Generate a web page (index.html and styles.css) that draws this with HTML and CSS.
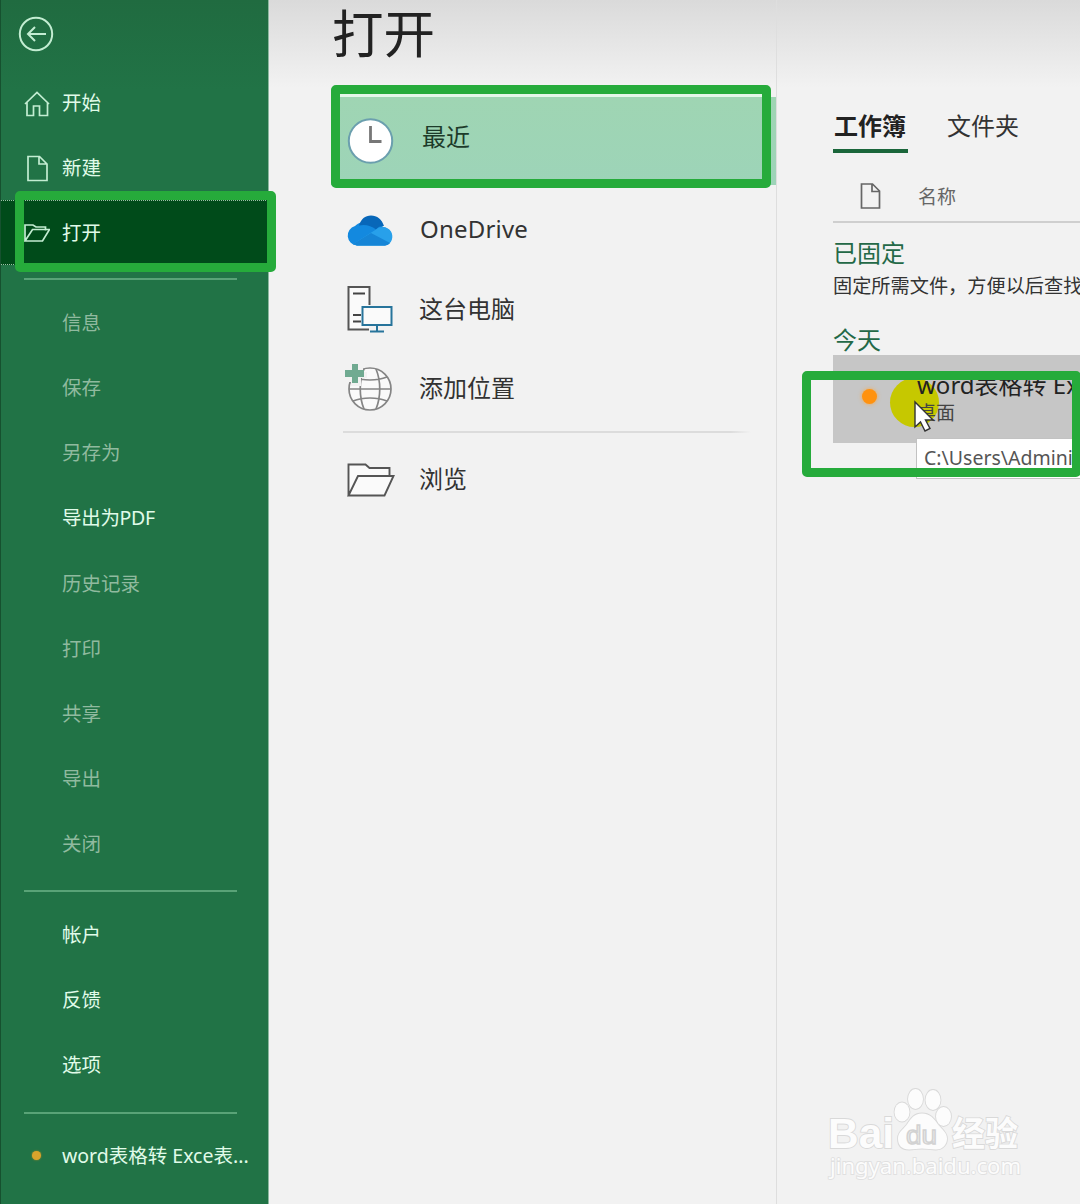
FILE: index.html
```html
<!DOCTYPE html>
<html lang="zh-CN">
<head>
<meta charset="utf-8">
<title>打开</title>
<link rel="stylesheet" href="styles.css">
</head>
<body>
<div class="app">
  <nav class="sidebar">
    <button class="back" aria-label="返回">
      <svg width="36" height="36" viewBox="0 0 36 36"><circle cx="18" cy="18" r="16.2"/><path d="M28 18H10M17 11L10 18l7 7"/></svg>
    </button>
    <a class="item"><svg class="ico" width="26" height="28" viewBox="0 0 26 28"><path d="M1 15L13 3.500 25 15M3 13.500V26.500h6.500V17h6v9.500H23.500V13.500"/></svg><span>开始</span></a>
    <a class="item"><svg class="ico" width="26" height="28" viewBox="0 0 26 28"><path d="M4 2.500h11.500l7.500 7.500v16.500H4zM15 2.500V10h8"/></svg><span>新建</span></a>
    <a class="item active"><svg class="ico" width="26" height="28" viewBox="0 0 26 28"><path d="M1 22V6h8l3 2h9.500v3.500M1 22l7.500-11.500H25.500L18.500 22z"/></svg><span>打开</span></a>
    <hr class="rule first">
    <a class="item off">信息</a>
    <a class="item off">保存</a>
    <a class="item off">另存为</a>
    <a class="item tight">导出为PDF</a>
    <a class="item off">历史记录</a>
    <a class="item off">打印</a>
    <a class="item off">共享</a>
    <a class="item off">导出</a>
    <a class="item off">关闭</a>
    <hr class="rule">
    <a class="item">帐户</a>
    <a class="item">反馈</a>
    <a class="item">选项</a>
    <hr class="rule">
    <a class="item recent"><i class="dot"></i><span>word表格转 Exce表...</span></a>
  </nav>

  <section class="places">
    <h1>打开</h1>
    <a class="place selected">
      <svg width="50" height="50" viewBox="0 0 50 50"><circle cx="25.500" cy="25" r="21.700" fill="#fff" stroke="#6b9fae" stroke-width="2"/><path d="M25.500 10v15.500h11" fill="none" stroke="#777" stroke-width="2.800"/></svg>
      <span>最近</span>
    </a>
    <a class="place">
      <svg width="50" height="50" viewBox="0 0 50 50"><path d="M12 39.500a10 10 0 0 1-2-19.600C12 18 14 17 16 16.500A15 15 0 0 1 38 21a9.500 9.500 0 0 1 2 18.500z" fill="#1389df"/><path d="M14 19.500C16 13 20 9.500 26 9.500c6 0 11 4 13 10.500-4 0-6 1-8 3.500-5-4-11-5.500-17-4z" fill="#0867b9"/><path d="M8 38L31 23.500c4-4 12-3 15 2 3 5 1 13-6 14H12z" fill="#28a0ea"/><path d="M8 38l18-11 19 10c-1 1.500-3 2.500-5 2.500H12z" fill="#1685d6"/></svg>
      <span class="latin">OneDrive</span>
    </a>
    <a class="place">
      <svg width="50" height="50" viewBox="0 0 50 50" fill="none"><path d="M24 44.500H3.500V2h21v18" fill="#fafafa" stroke="#555" stroke-width="2"/><path d="M8 8.500h12M8 30h8M8 36.500h8" stroke="#444" stroke-width="2"/><path d="M17.500 22h29v18h-29z" fill="#fafafa" stroke="#27749b" stroke-width="2"/><path d="M32 40v6M25 46.500h14" stroke="#27749b" stroke-width="2"/></svg>
      <span>这台电脑</span>
    </a>
    <a class="place">
      <svg width="50" height="50" viewBox="0 0 50 50"><g fill="none" stroke="#858585" stroke-width="1.700"><circle cx="25" cy="25" r="21" fill="#fafafa"/><path d="M19 5c-5 12-5 28 0 40M31 5c5 12 5 28 0 40M4 25h42M8 13c10 4 24 4 34 0M8 37c10-4 24-4 34 0"/></g><path d="M0 0h18v8h4v6h-6v8H6v-4H0z" fill="#f2f2f2"/><path d="M7 0h6v6h6v7h-6v6H7v-6H0V6h7z" fill="#70aa91"/></svg>
      <span>添加位置</span>
    </a>
    <hr>
    <a class="place browse">
      <svg width="50" height="50" viewBox="0 0 50 50"><path d="M3.500 40.500V9.500h17l4 3.500h20v8.500M3.500 40.500L13 21h35.500L39.500 40.500z" fill="#fafafa" stroke="#555" stroke-width="1.900"/></svg>
      <span>浏览</span>
    </a>
  </section>

  <main class="files">
    <div class="tabs"><span class="tab on">工作簿</span><span class="tab">文件夹</span></div>
    <div class="head"><svg width="22" height="28" viewBox="0 0 22 28"><path d="M1.500 2h11l7 7v17h-18zM12 2V9.500h7.500" fill="none" stroke="#666" stroke-width="1.700"/></svg><span>名称</span></div>
    <h2>已固定</h2>
    <p class="hint">固定所需文件，方便以后查找</p>
    <h2 class="today">今天</h2>
    <div class="file"><i class="dot big"></i><i class="halo"></i>
      <div class="info"><b>word表格转 Exce</b><small>桌面</small></div>
      <div class="tip">C:\Users\Admini</div>
      <svg class="cursor" width="22" height="34" viewBox="0 0 22 34"><path d="M2 2v25l5.500-5 4.500 9 5-2.500-4.500-8.500H20z" fill="#fff" stroke="#333" stroke-width="1.400"/></svg>
    </div>
  </main>
</div>

<div class="mark m-open"></div>
<div class="mark m-recent"></div>
<div class="mark m-file"></div>

<svg class="watermark" width="210" height="100" viewBox="820 1084 210 100">
  <g fill="#fcfcfc" stroke="#d9d9d9" stroke-width="1.800" paint-order="stroke">
    <text x="828" y="1148" class="wm-bai" textLength="66" lengthAdjust="spacingAndGlyphs">Bai</text>
    <ellipse cx="902" cy="1112" rx="7.500" ry="9.500"/><ellipse cx="915.500" cy="1099" rx="7.500" ry="10"/><ellipse cx="933" cy="1100" rx="7.500" ry="10"/><ellipse cx="943.500" cy="1116.500" rx="7.500" ry="9.500"/>
    <path d="M922 1113.500c-8 0-11 5-15 11-5 6-9 8-9 14 0 7 4 11 11 11 5 0 9-1 13-1s9 1 14 1c7 0 11-5 11-11 0-6-5-9-9-14-4-6-8-11-16-11z"/>
    <text x="952" y="1146" class="wm-cn" textLength="66" lengthAdjust="spacingAndGlyphs">经验</text>
    <text x="830" y="1174" class="wm-url" textLength="191" lengthAdjust="spacingAndGlyphs">jingyan.baidu.com</text>
  </g>
  <text x="906" y="1143.500" class="wm-du" textLength="31" lengthAdjust="spacingAndGlyphs">du</text>
</svg>
</body>
</html>
```
FILE: styles.css
```css
* { box-sizing: border-box; }
body {
  margin: 0;
  width: 1080px;
  height: 1204px;
  overflow: hidden;
  position: relative;
  background: #f2f2f2;
  color: #333;
  font-family: "Noto Sans", "Noto Sans CJK SC", sans-serif;
}
h1, h2, p, hr { margin: 0; border: 0; font-weight: 400; }
i { font-style: normal; }
.app {
  display: grid;
  grid-template-columns: 269px 508px 303px;
  height: 1204px;
  background: linear-gradient(#dadada, #f2f2f2 88px);
}

/* Sidebar */
.sidebar {
  display: flex;
  flex-direction: column;
  background: linear-gradient(#206b40, #217346 90px);
  border-left: 1px solid #16512f;
  border-right: 1px solid #8db79f;
  color: #e0fbe9;
}
.back {
  display: flex;
  align-items: flex-start;
  height: 70px;
  padding: 16px 0 0 17px;
  border: 0;
  background: none;
  flex: none;
}
.back svg, .ico { fill: none; stroke: #c3edd2; stroke-width: 1.700; }
.back svg { display: block; stroke-width: 2; }
.item {
  display: flex;
  align-items: center;
  flex: none;
  height: 65.100px;
  padding-left: 61px;
  font-size: 19.500px;
  line-height: 28px;
  white-space: nowrap;
}
.item:has(.ico) { padding-left: 23px; gap: 12px; }
.item.off { color: #90ba9f; }
.item.tight { letter-spacing: -.3px; }
.item.active {
  background: #004b1a;
  border-top: 1px dotted #9cc0a6;
  border-bottom: 1px dotted #9cc0a6;
}
.rule { flex: none; width: 213px; height: 2px; margin: 14px 0 9.800px 23px; background: #59a377; }
.rule.first { margin: 13px 0 10.300px 23px; }
.item.recent { padding-left: 31px; gap: 21px; }
.dot { width: 9px; height: 9px; border-radius: 50%; background: #d9a42c; box-shadow: 0 0 2px #b78b22; flex: none; }

/* Places */
.places { padding-left: 62px; border-right: 1px solid #dedede; display: flex; flex-direction: column; }
.places h1 { height: 97px; padding-left: 1px; font-size: 51.500px; line-height: 67px; color: #222; }
.place {
  display: flex;
  align-items: center;
  height: 79.300px;
  padding-left: 14px;
  gap: 24px;
  font-size: 24px;
  line-height: 34px;
}
.place svg { flex: none; }
.place span { padding-bottom: 2px; }
.place.selected {
  height: 88px;
  margin-bottom: 6px;
  background: linear-gradient(#9fd5b3, #9dd4b8);
  color: #1d3b2a;
}
.place.selected span { padding: 0 0 9px 3px; }
.place .latin { letter-spacing: .2px; padding: 0 0 4px 1px; }
.places hr { height: 2px; width: 408px; margin: 2px 0 7px 12px; background: linear-gradient(90deg, #dcdcdc 95%, #f2f2f2); }

/* Files */
.files { padding: 109px 0 0 56px; overflow: hidden; }
.tabs { display: flex; gap: 39px; height: 44px; }
.tab { font-size: 24px; line-height: 34px; white-space: nowrap; }
.tab.on { width: 75px; border-bottom: 4px solid #1b663b; font-weight: 700; color: #222; padding-left: 1px; }
.head {
  display: flex;
  align-items: center;
  gap: 36px;
  height: 70px;
  padding: 17px 0 0 27px;
  border-bottom: 2px solid #cfcfcf;
  font-size: 19px;
  color: #666;
}
.files h2 { font-size: 24px; line-height: 34px; color: #246947; padding-top: 13px; height: 47px; }
.hint { font-size: 19.200px; line-height: 32px; height: 40px; white-space: nowrap; }
.files h2.today { height: 45px; }
.file { position: relative; height: 88px; background: #c6c6c6; }
.dot.big { position: absolute; left: 29px; top: 34px; width: 15px; height: 15px; background: #ff920f; box-shadow: 0 0 4px #f5a94d; }
.halo { position: absolute; left: 57px; top: 23px; width: 49px; height: 49px; border-radius: 50%; background: #c6c800; }
.info { position: relative; padding: 13px 0 0 84px; display: flex; flex-direction: column; white-space: nowrap; color: #222; }
.info b { font-weight: 400; font-size: 24px; line-height: 34px; }
.info small { font-size: 19px; line-height: 22px; color: #444; }
.tip {
  position: absolute;
  left: 83px;
  top: 83px;
  width: 180px;
  height: 41px;
  padding-left: 7px;
  border: 1px solid #c2c2c2;
  background: #fff;
  font-size: 19.500px;
  line-height: 38px;
  color: #555;
}
.cursor { position: absolute; left: 80px; top: 45px; }

/* Highlight frames */
.mark { position: absolute; border: 9px solid #26ab3b; border-radius: 5px; }
.m-open { left: 15px; top: 191px; width: 261px; height: 81px; }
.m-recent { left: 331px; top: 85px; width: 440px; height: 103px; box-shadow: inset 0 3px #e4f6e9; }
.m-file { left: 802px; top: 371px; width: 279px; height: 106px; }

/* Watermark */
.watermark { position: absolute; left: 820px; top: 1084px; }
.wm-bai { font: 700 43px "Liberation Sans", sans-serif; }
.wm-cn { font: 700 34px "Noto Sans CJK SC", sans-serif; }
.wm-url { font: 22px "Noto Sans", sans-serif; stroke: #e0e0e0; }
.wm-du { font: 26px "Liberation Sans", sans-serif; fill: #ececec; stroke: #d2d2d2; stroke-width: 1.400; }
```
